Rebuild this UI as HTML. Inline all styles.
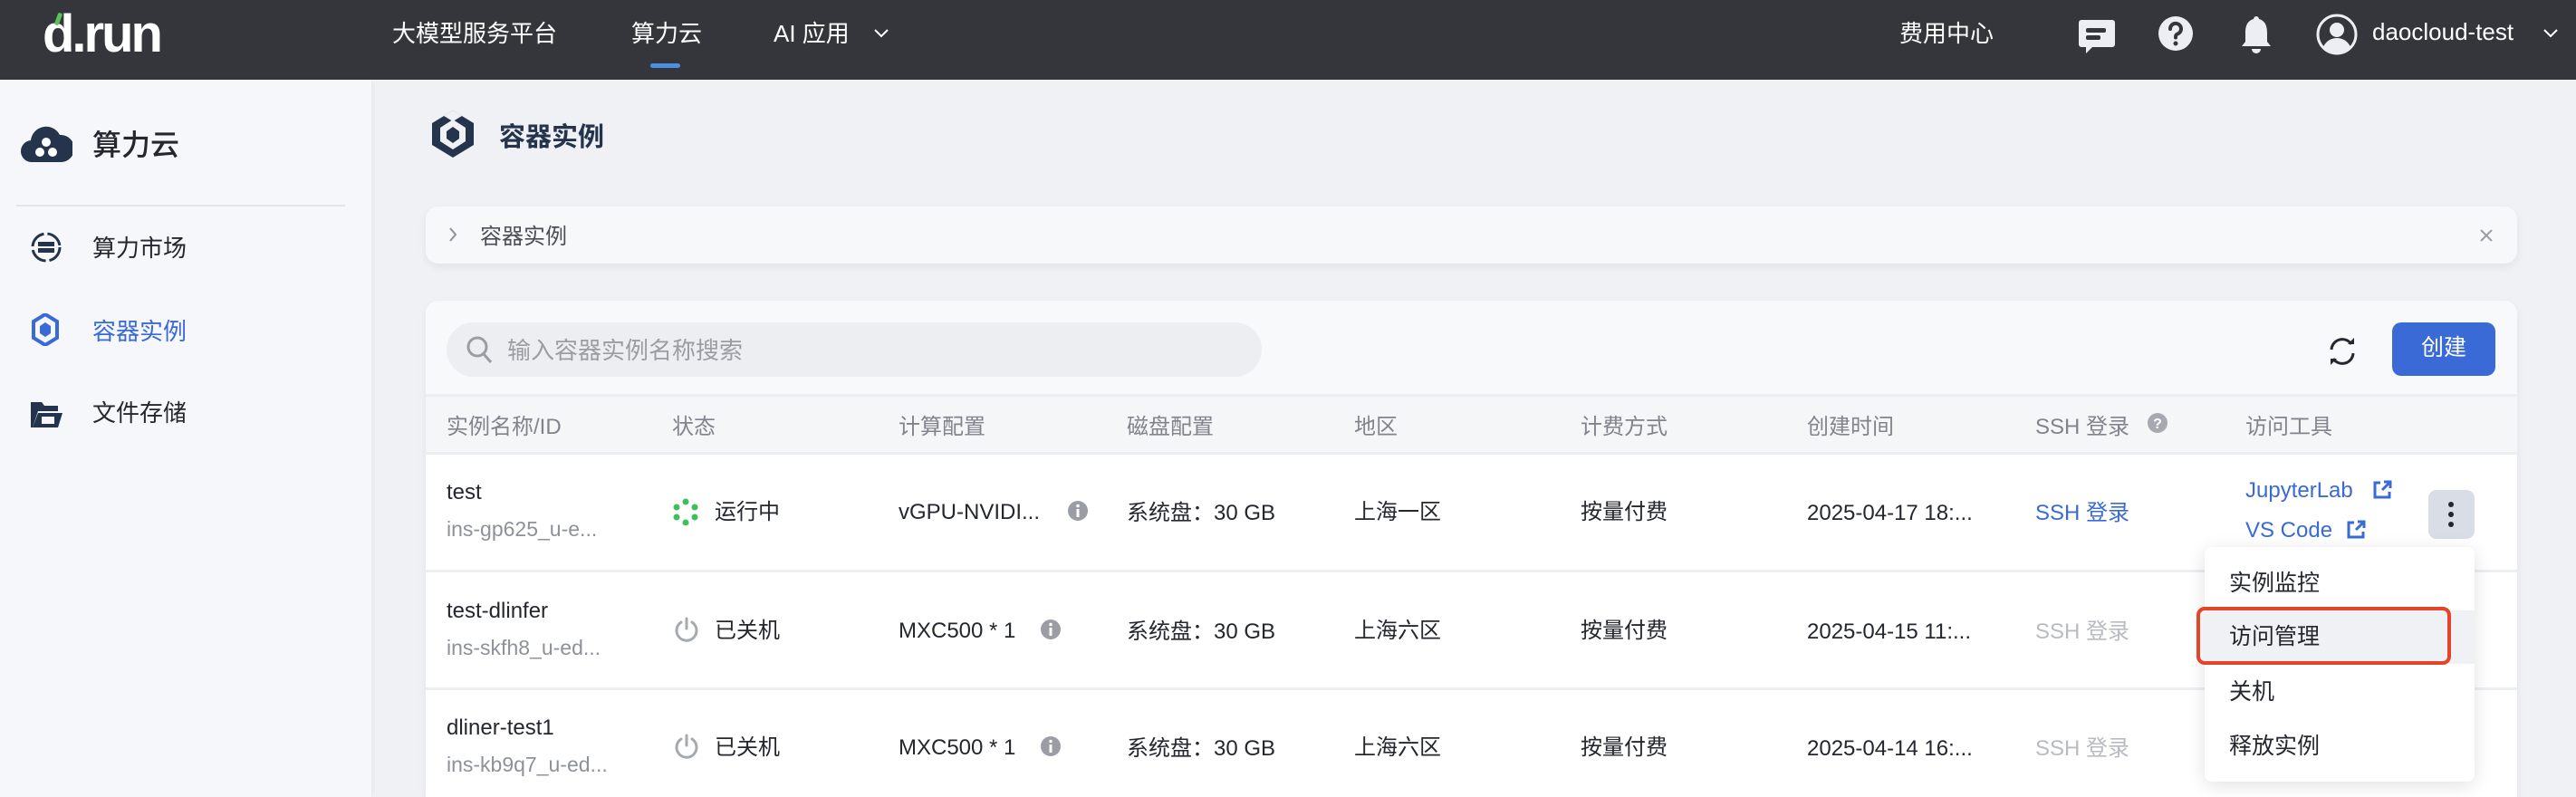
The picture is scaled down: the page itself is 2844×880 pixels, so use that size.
<!DOCTYPE html>
<html style="width:2844px;height:880px;overflow:hidden"><head><meta charset="utf-8"><style>
*{margin:0;padding:0;box-sizing:border-box}
body{width:2844px;height:880px;overflow:hidden;background:#f0f1f5;font-family:"Liberation Sans","Noto Sans CJK SC",sans-serif;color:#24272e;position:relative}
.a{position:absolute;white-space:nowrap}
.hdr{left:0;top:0;width:2844px;height:88px;background:#34363b}
.nav{color:#fff;font-size:26px;top:17px}
.side{left:0;top:88px;width:410px;height:792px;background:#f5f7fb;box-shadow:2px 0 6px rgba(0,0,0,.04)}
.mi{font-size:26px;left:102px;color:#24272e}
.card{background:#f7f8fa;border-radius:14px;box-shadow:0 4px 10px rgba(0,0,0,.06)}
.th{font-size:24px;color:#80848c;top:451px}
.td{font-size:24px;color:#24272e}
.sub{font-size:23px;color:#8d9199}
.blue{color:#3a6ad6}
.dis{color:#b8bbc2}
.ln{left:470px;width:2309px;height:3px;background:#eceef2}
</style></head><body>
<div class="a hdr"></div>
<div class="a" style="left:47px;top:4px;font-size:58px;font-weight:bold;color:#fff;letter-spacing:-3px">d.run</div>
<div class="a" style="left:62px;top:14px;width:5px;height:14px;background:#5bc15a;transform:rotate(20deg);border-radius:2px"></div>
<div class="a nav" style="left:433px">大模型服务平台</div>
<div class="a nav" style="left:697px">算力云</div>
<div class="a" style="left:718px;top:70px;width:33px;height:5px;border-radius:3px;background:#4a90e2"></div>
<div class="a nav" style="left:854px">AI 应用</div>
<svg class="a" style="left:963px;top:30px" width="20" height="14"><path d="M3 3l7 7 7-7" stroke="#fff" stroke-width="2" fill="none"/></svg>
<div class="a nav" style="left:2097px">费用中心</div>
<svg class="a" style="left:2294px;top:20px" width="42" height="40" viewBox="0 0 42 40"><path d="M4 2h34a3 3 0 0 1 3 3v24a3 3 0 0 1-3 3H16l-7 7v-7H4a3 3 0 0 1-3-3V5a3 3 0 0 1 3-3z" fill="#eceef4"/><rect x="9" y="11" width="22" height="5" rx="2" fill="#34363b"/><rect x="9" y="19" width="16" height="5" rx="2" fill="#34363b"/></svg>
<svg class="a" style="left:2382px;top:17px" width="40" height="40" viewBox="0 0 40 40"><circle cx="20" cy="20" r="19" fill="#eceef4"/><path d="M14 15a6 6 0 1 1 8 5.5c-2 1-2 2-2 4" stroke="#34363b" stroke-width="4" fill="none" stroke-linecap="round"/><circle cx="20" cy="31" r="2.5" fill="#34363b"/></svg>
<svg class="a" style="left:2471px;top:16px" width="40" height="44" viewBox="0 0 40 44"><path d="M20 2c2 0 3 2 3 3 7 2 9 8 9 15v10l4 5H4l4-5V20c0-7 2-13 9-15 0-1 1-3 3-3z" fill="#eceef4"/><path d="M15 38h10a5 5 0 0 1-10 0z" fill="#eceef4"/></svg>
<svg class="a" style="left:2557px;top:15px" width="46" height="46" viewBox="0 0 46 46"><circle cx="23" cy="23" r="21" fill="none" stroke="#eceef4" stroke-width="3"/><circle cx="23" cy="18" r="8" fill="#eceef4"/><path d="M8 37c3-7 9-10 15-10s12 3 15 10a21 21 0 0 1-30 0z" fill="#eceef4"/></svg>
<div class="a" style="left:2619px;top:20px;font-size:26px;color:#fff">daocloud-test</div>
<svg class="a" style="left:2806px;top:30px" width="20" height="14"><path d="M3 3l7 7 7-7" stroke="#fff" stroke-width="2" fill="none"/></svg>

<div class="a side"></div>
<svg class="a" style="left:22px;top:135px" width="58" height="46" viewBox="0 0 58 46"><path d="M14 44a12 12 0 0 1-2-24A17 17 0 0 1 44 14a14 14 0 0 1 2 30z" fill="#24344d"/><circle cx="29" cy="22" r="5" fill="#fff"/><circle cx="22" cy="33" r="5" fill="#fff"/><circle cx="36" cy="33" r="5" fill="#fff"/></svg>
<div class="a" style="left:102px;top:135px;font-size:32px;font-weight:500">算力云</div>
<div class="a" style="left:18px;top:226px;width:363px;height:2px;background:#e3e5ea"></div>
<svg class="a" style="left:33px;top:255px" width="36" height="36" viewBox="0 0 36 36"><circle cx="18" cy="18" r="15" fill="none" stroke="#24344d" stroke-width="3" stroke-dasharray="20 4"/><rect x="9" y="12" width="18" height="5" fill="#24344d"/><rect x="9" y="19" width="18" height="5" fill="#24344d"/></svg>
<div class="a mi" style="top:254px">算力市场</div>
<svg class="a" style="left:35px;top:346px" width="30" height="36" viewBox="0 0 30 36"><path d="M15 1l13 8v18l-13 8L2 27V9z" fill="none" stroke="#3a6ad6" stroke-width="4"/><path d="M15 10l6 4v8l-6 4-6-4v-8z" fill="#3a6ad6"/></svg>
<div class="a mi blue" style="top:346px">容器实例</div>
<svg class="a" style="left:32px;top:440px" width="38" height="34" viewBox="0 0 38 34"><path d="M2 4h12l3 4h15v6H10L4 32H2z" fill="#24344d"/><path d="M10 16h27l-5 16H4z" fill="#24344d"/><rect x="14" y="20" width="14" height="8" fill="#f5f7fb"/></svg>
<div class="a mi" style="top:436px">文件存储</div>

<svg class="a" style="left:473px;top:120px" width="54" height="56" viewBox="0 0 54 56"><path d="M27 2l23 14v24L27 54 4 40V16z" fill="#24344d"/><path d="M27 12l14 9v15l-14 9-14-9V21z" fill="#f0f1f5"/><path d="M27 20l7 5v8l-7 5-7-5v-8z" fill="#24344d"/><path d="M27 2l-10 6 10 6 10-6z" fill="#f0f1f5"/></svg>
<div class="a" style="left:551px;top:128px;font-size:29px;font-weight:bold;color:#24344d">容器实例</div>

<div class="a card" style="left:470px;top:228px;width:2309px;height:63px"></div>
<svg class="a" style="left:494px;top:249px" width="12" height="20"><path d="M3 3l6 7-6 7" stroke="#8d9199" stroke-width="2" fill="none"/></svg>
<div class="a" style="left:530px;top:241px;font-size:24px;color:#4a4e56">容器实例</div>
<svg class="a" style="left:2735px;top:250px" width="20" height="20"><path d="M4 4l12 12M16 4L4 16" stroke="#9a9da4" stroke-width="2"/></svg>

<div class="a card" style="left:470px;top:332px;width:2309px;height:548px;background:#f8f9fb;border-radius:14px 14px 0 0"></div>
<div class="a" style="left:493px;top:356px;width:900px;height:60px;border-radius:30px;background:#eceef2"></div>
<svg class="a" style="left:514px;top:370px" width="32" height="34"><circle cx="13" cy="13" r="10" fill="none" stroke="#9a9da4" stroke-width="3"/><path d="M20 21l8 9" stroke="#9a9da4" stroke-width="3"/></svg>
<div class="a" style="left:560px;top:367px;font-size:26px;color:#9a9da4">输入容器实例名称搜索</div>
<svg class="a" style="left:2566px;top:368px" width="40" height="40" viewBox="0 0 40 40"><path d="M8 18a12 12 0 0 1 22-6" stroke="#24272e" stroke-width="3" fill="none"/><path d="M32 22a12 12 0 0 1-22 6" stroke="#24272e" stroke-width="3" fill="none"/><path d="M26 12h7V5z" fill="#24272e"/><path d="M14 28H7v7z" fill="#24272e"/></svg>
<div class="a" style="left:2641px;top:356px;width:114px;height:59px;border-radius:10px;background:#3a6ad6;color:#fff;font-size:25px;text-align:center;line-height:56px">创建</div>

<div class="a" style="left:470px;top:437px;width:2309px;height:63px;background:#f5f6f8"></div>
<div class="a ln" style="top:435px"></div>
<div class="a th" style="left:493px">实例名称/ID</div>
<div class="a th" style="left:742px">状态</div>
<div class="a th" style="left:992px">计算配置</div>
<div class="a th" style="left:1244px">磁盘配置</div>
<div class="a th" style="left:1495px">地区</div>
<div class="a th" style="left:1745px">计费方式</div>
<div class="a th" style="left:1995px">创建时间</div>
<div class="a th" style="left:2247px">SSH 登录</div>
<svg class="a" style="left:2370px;top:455px" width="24" height="24"><circle cx="12" cy="12" r="11" fill="#a6a9b0"/><text x="12" y="18" font-size="16" font-weight="bold" fill="#fff" text-anchor="middle" font-family="Liberation Sans">?</text></svg>
<div class="a th" style="left:2479px">访问工具</div>

<div class="a" style="left:470px;top:500px;width:2309px;height:380px;background:#fff"></div>
<div class="a ln" style="top:499px"></div>
<div class="a ln" style="top:629px"></div>
<div class="a ln" style="top:759px"></div>

<!-- row1 -->
<div class="a td" style="left:493px;top:530px">test</div>
<div class="a sub" style="left:493px;top:571px">ins-gp625_u-e...</div>
<svg class="a" style="left:742px;top:550px" width="30" height="30" viewBox="0 0 30 30"><g fill="#3fbf5a"><circle cx="15" cy="4" r="3.5"/><circle cx="25" cy="10" r="3.5"/><circle cx="25" cy="21" r="3.5"/><circle cx="15" cy="27" r="3.5"/><circle cx="5" cy="21" r="3.5"/><circle cx="5" cy="10" r="3.5"/></g></svg>
<div class="a td" style="left:789px;top:545px">运行中</div>
<div class="a td" style="left:992px;top:552px">vGPU-NVIDI...</div>
<svg class="a" style="left:1178px;top:552px" width="24" height="24"><circle cx="12" cy="12" r="11" fill="#9a9da4"/><rect x="10.5" y="10" width="3" height="9" fill="#fff"/><circle cx="12" cy="6.5" r="1.8" fill="#fff"/></svg>
<div class="a td" style="left:1244px;top:546px">系统盘：30 GB</div>
<div class="a td" style="left:1495px;top:545px">上海一区</div>
<div class="a td" style="left:1745px;top:545px">按量付费</div>
<div class="a td" style="left:1995px;top:553px">2025-04-17 18:...</div>
<div class="a td blue" style="left:2247px;top:546px">SSH 登录</div>
<div class="a td blue" style="left:2479px;top:528px">JupyterLab</div>
<svg class="a" style="left:2619px;top:530px" width="22" height="22"><path d="M9 3H3v16h16v-6" stroke="#3a6ad6" stroke-width="3" fill="none"/><path d="M11 11l8-8M13 2h7v7" stroke="#3a6ad6" stroke-width="3" fill="none"/></svg>
<div class="a td blue" style="left:2479px;top:572px">VS Code</div>
<svg class="a" style="left:2590px;top:574px" width="22" height="22"><path d="M9 3H3v16h16v-6" stroke="#3a6ad6" stroke-width="3" fill="none"/><path d="M11 11l8-8M13 2h7v7" stroke="#3a6ad6" stroke-width="3" fill="none"/></svg>
<div class="a" style="left:2681px;top:541px;width:51px;height:54px;border-radius:9px;background:#d9dde5"></div>
<div class="a" style="left:2703px;top:554px;width:6px;height:6px;border-radius:3px;background:#24272e"></div>
<div class="a" style="left:2703px;top:565px;width:6px;height:6px;border-radius:3px;background:#24272e"></div>
<div class="a" style="left:2703px;top:576px;width:6px;height:6px;border-radius:3px;background:#24272e"></div>

<!-- row2 -->
<div class="a td" style="left:493px;top:661px">test-dlinfer</div>
<div class="a sub" style="left:493px;top:702px">ins-skfh8_u-ed...</div>
<svg class="a" style="left:743px;top:680px" width="30" height="30" viewBox="0 0 30 30"><path d="M9 7a11 11 0 1 0 12 0" stroke="#a6a9b0" stroke-width="3" fill="none" stroke-linecap="round"/><path d="M15 3v11" stroke="#a6a9b0" stroke-width="3" stroke-linecap="round"/></svg>
<div class="a td" style="left:789px;top:676px">已关机</div>
<div class="a td" style="left:992px;top:683px">MXC500 * 1</div>
<svg class="a" style="left:1148px;top:683px" width="24" height="24"><circle cx="12" cy="12" r="11" fill="#9a9da4"/><rect x="10.5" y="10" width="3" height="9" fill="#fff"/><circle cx="12" cy="6.5" r="1.8" fill="#fff"/></svg>
<div class="a td" style="left:1244px;top:677px">系统盘：30 GB</div>
<div class="a td" style="left:1495px;top:676px">上海六区</div>
<div class="a td" style="left:1745px;top:676px">按量付费</div>
<div class="a td" style="left:1995px;top:684px">2025-04-15 11:...</div>
<div class="a td dis" style="left:2247px;top:677px">SSH 登录</div>

<!-- row3 -->
<div class="a td" style="left:493px;top:790px">dliner-test1</div>
<div class="a sub" style="left:493px;top:831px">ins-kb9q7_u-ed...</div>
<svg class="a" style="left:743px;top:809px" width="30" height="30" viewBox="0 0 30 30"><path d="M9 7a11 11 0 1 0 12 0" stroke="#a6a9b0" stroke-width="3" fill="none" stroke-linecap="round"/><path d="M15 3v11" stroke="#a6a9b0" stroke-width="3" stroke-linecap="round"/></svg>
<div class="a td" style="left:789px;top:805px">已关机</div>
<div class="a td" style="left:992px;top:812px">MXC500 * 1</div>
<svg class="a" style="left:1148px;top:812px" width="24" height="24"><circle cx="12" cy="12" r="11" fill="#9a9da4"/><rect x="10.5" y="10" width="3" height="9" fill="#fff"/><circle cx="12" cy="6.5" r="1.8" fill="#fff"/></svg>
<div class="a td" style="left:1244px;top:806px">系统盘：30 GB</div>
<div class="a td" style="left:1495px;top:805px">上海六区</div>
<div class="a td" style="left:1745px;top:805px">按量付费</div>
<div class="a td" style="left:1995px;top:813px">2025-04-14 16:...</div>
<div class="a td dis" style="left:2247px;top:806px">SSH 登录</div>

<!-- dropdown -->
<div class="a" style="left:2434px;top:604px;width:298px;height:259px;background:#fff;border-radius:8px;box-shadow:0 4px 20px rgba(0,0,0,.12)"></div>
<div class="a" style="left:2434px;top:674px;width:298px;height:59px;background:#f0f1f5"></div>
<div class="a" style="left:2425px;top:670px;width:281px;height:64px;border:4px solid #e5432a;border-radius:9px"></div>
<div class="a td" style="left:2461px;top:624px;font-size:25px">实例监控</div>
<div class="a td" style="left:2461px;top:683px;font-size:25px">访问管理</div>
<div class="a td" style="left:2461px;top:744px;font-size:25px">关机</div>
<div class="a td" style="left:2461px;top:804px;font-size:25px">释放实例</div>
</body></html>
